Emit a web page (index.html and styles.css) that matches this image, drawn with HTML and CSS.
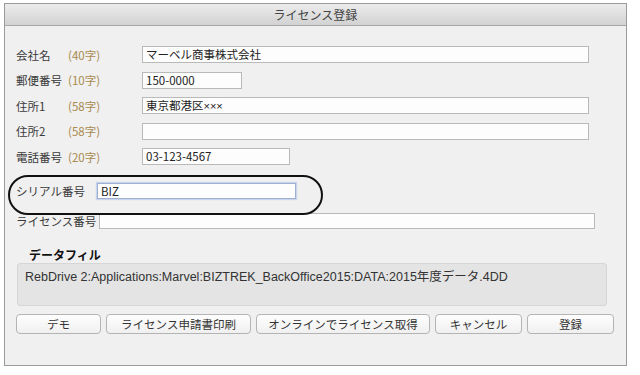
FILE: index.html
```html
<!DOCTYPE html>
<html lang="ja">
<head>
    <meta charset="UTF-8">
    <meta name="viewport" content="width=device-width, initial-scale=1.0">
    <title>ライセンス登録</title>
    <link rel="stylesheet" href="styles.css">
</head>
<body>

<div class="window">
    <div class="titlebar">ライセンス登録</div>

    <div class="content">
        <!-- company info -->
        <div class="row">
            <span class="label">会社名</span><span class="limit">(40字)</span>
            <div class="field w-long">マーベル商事株式会社</div>
        </div>
        <div class="row">
            <span class="label">郵便番号</span><span class="limit">(10字)</span>
            <div class="field w-zip">150-0000</div>
        </div>
        <div class="row">
            <span class="label">住所1</span><span class="limit">(58字)</span>
            <div class="field w-long">東京都港区<span class="latin">×××</span></div>
        </div>
        <div class="row">
            <span class="label">住所2</span><span class="limit">(58字)</span>
            <div class="field w-long"></div>
        </div>
        <div class="row">
            <span class="label">電話番号</span><span class="limit">(20字)</span>
            <div class="field w-tel">03-123-4567</div>
        </div>

        <div class="serial-row">
            <span class="serial-label">シリアル番号</span>
            <div class="field serial-field">BIZ</div>
        </div>
        <div class="license-row">
            <span class="license-label">ライセンス番号</span>
            <div class="field license-field"></div>
        </div>

        <div class="datafile">
            <div class="datafile-title">データフィル</div>
            <div class="datafile-box">RebDrive 2:Applications:Marvel:BIZTREK_BackOffice2015:DATA:2015年度データ.4DD</div>
        </div>

        <div class="buttons">
            <button class="btn b-demo">デモ</button>
            <button class="btn b-print">ライセンス申請書印刷</button>
            <button class="btn b-online">オンラインでライセンス取得</button>
            <button class="btn b-cancel">キャンセル</button>
            <button class="btn b-ok">登録</button>
        </div>
    </div>

    <!-- hand drawn highlight around the serial number -->
    <div class="oval"></div>
</div>

</body>
</html>
```

FILE: styles.css
```css
body {
    margin: 0;
    background: #ffffff;
    font-family: "Noto Sans CJK JP", "Noto Sans", sans-serif;
    font-size: 11.5px;
    color: #3a3a3a;
}
.window {
    position: relative;
    box-sizing: border-box;
    width: 623px;
    height: 363px;
    margin: 3px 0 0 4px;
    border: 1px solid #9a9a9a;
    background: #f0f0f0;
}
.titlebar {
    height: 21px;
    line-height: 21px;
    text-align: center;
    font-size: 12px;
    color: #444;
    background: linear-gradient(#ececec, #d2d2d2);
    border-bottom: 1px solid #a8a8a8;
}
.content {
    padding: 20px 0 0 11px;
}
.row {
    display: flex;
    align-items: center;
    height: 17px;
    margin-bottom: 8.5px;
}
.label {
    width: 52px;
    white-space: nowrap;
}
.limit {
    width: 74px;
    color: #a88a4e;
}
.field {
    box-sizing: border-box;
    height: 17px;
    line-height: 15px;
    padding: 0 3px;
    background: #fdfdfd;
    border: 1px solid #b9b9b9;
    color: #222;
    white-space: nowrap;
}
.latin {
    font-family: "Liberation Sans", sans-serif;
    font-size: 11px;
}
.w-long { width: 447px; }
.w-zip { width: 100px; }
.w-tel { width: 148px; }

.serial-row {
    display: flex;
    align-items: center;
    margin-top: 18px;
}
.serial-label {
    width: 81px;
}
.serial-field {
    width: 199px;
    height: 16px;
    line-height: 14px;
    border-color: #9fb0d4;
    box-shadow: 0 0 1px 1px #c8d4ec;
}
.license-row {
    display: flex;
    align-items: center;
    margin-top: 14px;
}
.license-label {
    width: 83px;
    white-space: nowrap;
}
.license-field {
    width: 496px;
    height: 16px;
}
.datafile {
    margin-top: 18px;
}
.datafile-title {
    padding-left: 13px;
    font-weight: bold;
    font-size: 12px;
    line-height: 15px;
    color: #111;
}
.datafile-box {
    box-sizing: border-box;
    width: 590px;
    height: 43px;
    margin: 1px 0 0 1px;
    padding: 2px 7px;
    background: #e4e4e4;
    border: 1px solid #d6d6d6;
    border-radius: 3px;
    font-family: "Liberation Sans", "Noto Sans CJK JP", sans-serif;
    font-size: 12.5px;
    color: #333;
}
.buttons {
    display: flex;
    gap: 5px;
    margin-top: 8px;
}
.btn {
    height: 20px;
    padding: 0;
    font-family: inherit;
    font-size: 11.5px;
    color: #333;
    background: linear-gradient(#fefefe, #f0f0f0);
    border: 1px solid #b4b4b4;
    border-radius: 4px;
}
.b-demo { width: 85px; }
.b-print { width: 145px; }
.b-online { width: 174px; }
.b-cancel { width: 87px; }
.b-ok { width: 87px; }

.oval {
    position: absolute;
    left: 3px;
    top: 171px;
    width: 315px;
    height: 40px;
    box-sizing: border-box;
    border: 2px solid #111;
    border-radius: 22px;
}
```
